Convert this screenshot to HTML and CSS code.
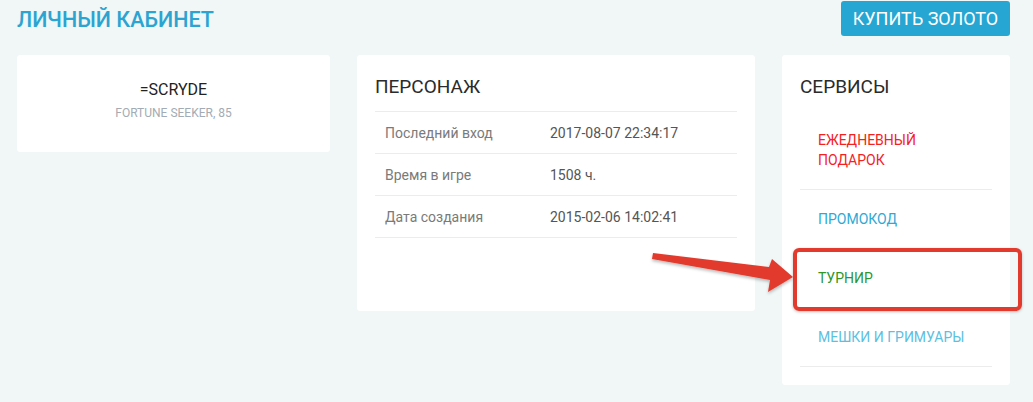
FILE: index.html
```html
<!DOCTYPE html>
<html lang="ru">
<head>
    <meta charset="UTF-8">
    <meta name="viewport" content="width=device-width, initial-scale=1.0">
    <title>Личный кабинет</title>
    <link rel="stylesheet" href="styles.css">
</head>
<body>
    <div class="page">
        <div class="header">
            <h1>Личный кабинет</h1>
            <button class="buy-btn">Купить золото</button>
        </div>

        <div class="cards">
            <div class="card hero">
                <div class="hero-name">=SCRYDE</div>
                <div class="hero-sub">Fortune Seeker, 85</div>
            </div>

            <div class="card char">
                <h2>Персонаж</h2>
                <table class="info">
                    <tr>
                        <td>Последний вход</td>
                        <td>2017-08-07 22:34:17</td>
                    </tr>
                    <tr>
                        <td>Время в игре</td>
                        <td>1508 ч.</td>
                    </tr>
                    <tr>
                        <td>Дата создания</td>
                        <td>2015-02-06 14:02:41</td>
                    </tr>
                </table>
            </div>

            <div class="card services">
                <h2>Сервисы</h2>
                <ul class="service-list">
                    <li><a class="red">Ежедневный подарок</a></li>
                    <li><a class="blue">Промокод</a></li>
                    <li><a class="green">Турнир</a></li>
                    <li><a class="light">Мешки и гримуары</a></li>
                </ul>
            </div>
        </div>
    </div>

    <!-- пометка поверх скриншота -->
    <div class="mark-box"></div>
    <svg class="mark-arrow" width="1033" height="402" viewBox="0 0 1033 402">
        <defs>
            <filter id="sh" x="-10%" y="-50%" width="120%" height="200%">
                <feDropShadow dx="0" dy="2" stdDeviation="1.5" flood-color="#000" flood-opacity="0.25"/>
            </filter>
        </defs>
        <polygon filter="url(#sh)" fill="#e23b2e"
            points="653,253 769,267 772,259 793,277 768,292 770,280 652,259"/>
    </svg>
</body>
</html>
```

FILE: styles.css
```css
body {
    margin: 0;
    background: #f1f6f6;
    font-family: 'Roboto', 'Liberation Sans', sans-serif;
    color: #333;
}
.page {
    padding: 1px 23px 0 17px;
}
.header {
    display: flex;
    justify-content: space-between;
    align-items: flex-start;
    margin-bottom: 19px;
}
h1 {
    margin: 6px 0 0;
    font-size: 21.5px;
    font-weight: 500;
    line-height: 26px;
    color: #2ba4d2;
    text-transform: uppercase;
}
.buy-btn {
    background: #26a6d3;
    border: none;
    color: #fff;
    font-family: inherit;
    font-size: 18px;
    height: 35px;
    width: 169px;
    padding: 0;
    border-radius: 3px;
    text-transform: uppercase;
    cursor: pointer;
}
.cards {
    display: grid;
    grid-template-columns: 313px 398px 228px;
    gap: 27px;
    align-items: start;
}
.card {
    background: #fff;
    border-radius: 3px;
    padding: 18px;
}
.card h2 {
    margin: 0 0 10px;
    font-size: 19px;
    font-weight: 400;
    line-height: 28px;
    color: #2b2b2b;
    text-transform: uppercase;
}
.hero {
    padding: 24px 0 31px;
    text-align: center;
}
.hero-name {
    font-size: 16px;
    line-height: 22px;
    color: #222;
}
.hero-sub {
    margin-top: 4px;
    font-size: 12px;
    line-height: 16px;
    color: #a3abb4;
    text-transform: uppercase;
}
.char {
    padding-bottom: 73px;
}
.info {
    width: 100%;
    border-collapse: collapse;
    border-top: 1px solid #ececec;
    font-size: 14px;
}
.info td {
    height: 41px;
    padding: 0 10px;
    border-bottom: 1px solid #ececec;
    color: #555;
}
.info td:first-child {
    width: 145px;
    color: #7a7a7a;
}
.service-list {
    list-style: none;
    margin: 0;
    padding: 0;
}
.service-list li {
    border-bottom: 1px solid #ececec;
    padding: 19px 18px;
    font-size: 14px;
    line-height: 20px;
    text-transform: uppercase;
}
.service-list li:first-child {
    padding-right: 60px;
}
.red { color: #f4221f; }
.blue { color: #2da9d6; }
.green { color: #2e962b; }
.light { color: #5cc0df; }
.mark-box {
    position: absolute;
    left: 793px;
    top: 248px;
    width: 221px;
    height: 55px;
    border: 4px solid #e23b2e;
    border-radius: 6px;
    box-shadow: 0 1px 3px rgba(0, 0, 0, 0.25);
}
.mark-arrow {
    position: absolute;
    left: 0;
    top: 0;
    pointer-events: none;
}
```
